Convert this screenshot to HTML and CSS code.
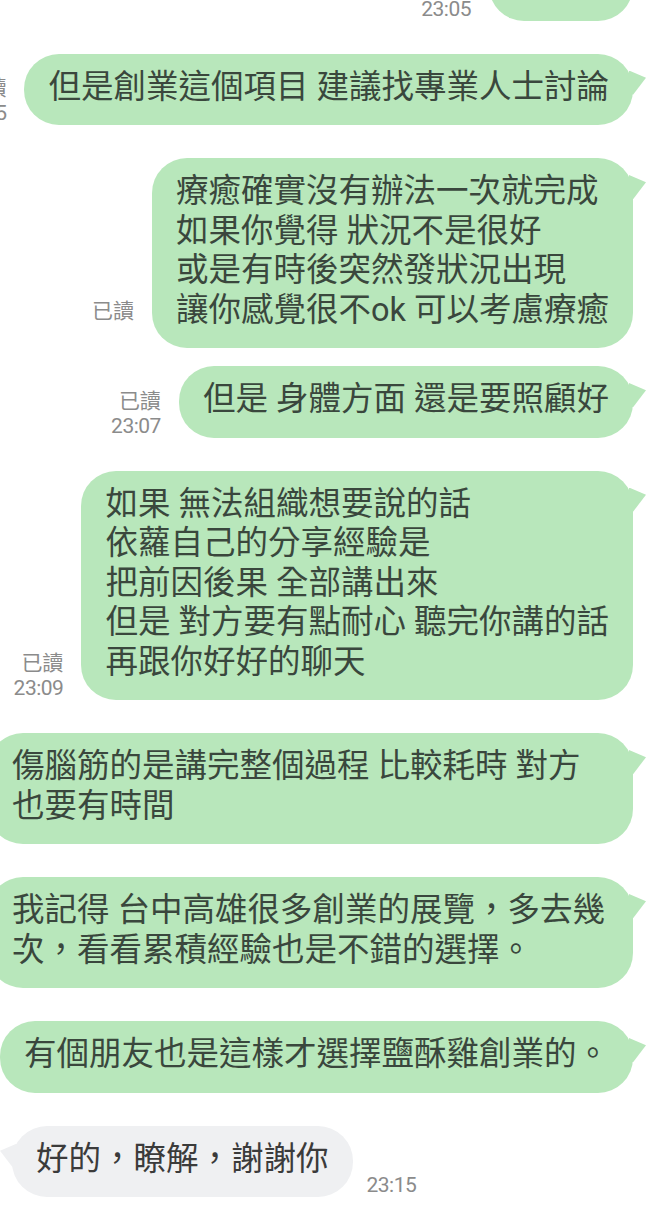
FILE: index.html
```html
<!DOCTYPE html>
<html lang="zh-Hant">
<head>
    <meta charset="UTF-8">
    <meta name="viewport" content="width=device-width, initial-scale=1.0">
    <title>聊天</title>
    <link rel="stylesheet" href="styles.css">
</head>
<body>
    <div class="chat">
        <!-- 上一則訊息，只看得到底部 -->
        <div class="row sent first">
            <div class="meta">
                <span class="time">23:05</span>
            </div>
            <div class="bubble partial">&nbsp;</div>
        </div>

        <div class="row sent">
            <div class="meta">
                <span class="read">已讀</span>
                <span class="time">23:05</span>
            </div>
            <div class="bubble">但是創業這個項目 建議找專業人士討論</div>
        </div>

        <div class="row sent">
            <div class="meta">
                <span class="read">已讀</span>
                <span class="time">&nbsp;</span>
            </div>
            <div class="bubble">療癒確實沒有辦法一次就完成<br>如果你覺得 狀況不是很好<br>或是有時後突然發狀況出現<br>讓你感覺很不ok 可以考慮療癒</div>
        </div>

        <div class="row sent close">
            <div class="meta">
                <span class="read">已讀</span>
                <span class="time">23:07</span>
            </div>
            <div class="bubble">但是 身體方面 還是要照顧好</div>
        </div>

        <div class="row sent">
            <div class="meta">
                <span class="read">已讀</span>
                <span class="time">23:09</span>
            </div>
            <div class="bubble">如果 無法組織想要說的話<br>依蘿自己的分享經驗是<br>把前因後果 全部講出來<br>但是 對方要有點耐心 聽完你講的話<br>再跟你好好的聊天</div>
        </div>

        <div class="row sent">
            <div class="bubble">傷腦筋的是講完整個過程 比較耗時 對方也要有時間</div>
        </div>

        <div class="row sent">
            <div class="bubble">我記得 台中高雄很多創業的展覽，多去幾次，看看累積經驗也是不錯的選擇。</div>
        </div>

        <div class="row sent">
            <div class="bubble">有個朋友也是這樣才選擇鹽酥雞創業的。</div>
        </div>

        <div class="row received">
            <div class="bubble">好的，瞭解，謝謝你</div>
            <div class="meta">
                <span class="time">23:15</span>
            </div>
        </div>
    </div>
</body>
</html>
```

FILE: styles.css
```css
body {
    margin: 0;
    background-color: #ffffff;
    font-family: Roboto, "Noto Sans CJK TC", sans-serif;
    overflow: hidden;
}
.chat {
    display: flex;
    flex-direction: column;
    padding: 0 17px 0 12px;
}
.row {
    display: flex;
    align-items: flex-end;
    margin-top: 33px;
}
.row.first {
    margin-top: -51px;
}
.row.close {
    margin-top: 18px;
}
.row.sent {
    justify-content: flex-end;
    gap: 18px;
}
.row.received {
    justify-content: flex-start;
    gap: 14px;
}
.bubble {
    position: relative;
    flex-shrink: 0;
    max-width: 597px;
    padding: 14px 24px 18px;
    border-radius: 35px;
    font-size: 32.5px;
    line-height: 39.5px;
    color: #3a473d;
    background-color: #b8e7bb;
}
.bubble.partial {
    width: 96px;
}
/* 氣泡的小尾巴 */
.bubble::after {
    content: "";
    position: absolute;
    top: 17px;
    width: 17px;
    height: 24px;
    background-color: inherit;
}
.sent .bubble::after {
    right: -13px;
    clip-path: polygon(0 0, 100% 30%, 25% 100%, 0 100%);
}
.received .bubble {
    color: #3b3b3b;
    background-color: #eff0f2;
}
.received .bubble::after {
    left: -12px;
    top: 18px;
    clip-path: polygon(100% 0, 0 30%, 75% 100%, 100% 100%);
}
.meta {
    flex-shrink: 0;
    display: flex;
    flex-direction: column;
    align-items: flex-end;
    margin-bottom: -2px;
    font-size: 21px;
    line-height: 27px;
    color: #8b8b8b;
}
.received .meta {
    align-items: flex-start;
}
.meta .read {
    font-family: "Noto Sans CJK TC", sans-serif;
}
.meta .time {
    font-family: Roboto, sans-serif;
    letter-spacing: -0.5px;
}
```
